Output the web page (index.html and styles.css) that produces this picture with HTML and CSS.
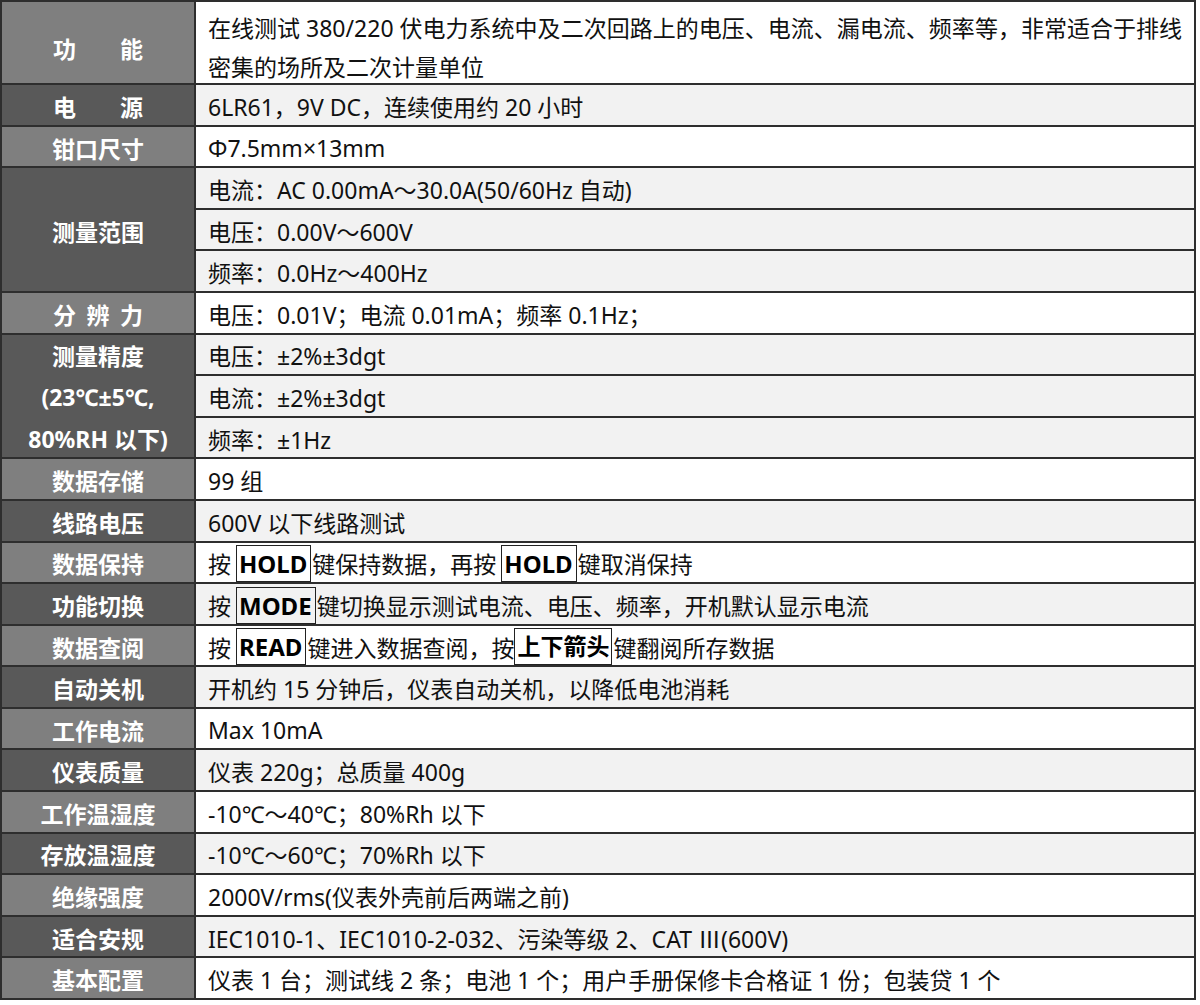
FILE: index.html
```html
<!DOCTYPE html>
<html lang="zh-CN">
<head>
<meta charset="utf-8">
<title>技术参数</title>
<link rel="stylesheet" href="styles.css">
</head>
<body>
<div class="spec">
  <div class="k light r2 first"><span class="pair"><span>功</span><span>能</span></span></div>
  <div class="v w r2 first">
    <div class="line just">在线测试 380/220 伏电力系统中及二次回路上的电压、电流、漏电流、频率等，非常适合于排线</div>
    <div class="line">密集的场所及二次计量单位</div>
  </div>

  <div class="k dark"><span class="pair"><span>电</span><span>源</span></span></div>
  <div class="v g">6LR61，9V DC，连续使用约 20 小时</div>

  <div class="k light">钳口尺寸</div>
  <div class="v w">Φ7.5mm×13mm</div>

  <div class="k dark r3">测量范围</div>
  <div class="v g">电流：AC 0.00mA～30.0A(50/60Hz 自动)</div>
  <div class="v g">电压：0.00V～600V</div>
  <div class="v g">频率：0.0Hz～400Hz</div>

  <div class="k light"><span class="pair"><span>分</span><span>辨</span><span>力</span></span></div>
  <div class="v w">电压：0.01V；电流 0.01mA；频率 0.1Hz；</div>

  <div class="k dark r3 multi"><span>测量精度</span><span>(23℃±5℃,</span><span>80%RH 以下)</span></div>
  <div class="v g">电压：±2%±3dgt</div>
  <div class="v g">电流：±2%±3dgt</div>
  <div class="v g">频率：±1Hz</div>

  <div class="k light">数据存储</div>
  <div class="v w">99 组</div>

  <div class="k dark">线路电压</div>
  <div class="v g">600V 以下线路测试</div>

  <div class="k light">数据保持</div>
  <div class="v w">按<b class="key latin">HOLD</b>键保持数据，再按<b class="key latin">HOLD</b>键取消保持</div>

  <div class="k dark">功能切换</div>
  <div class="v g">按<b class="key latin">MODE</b>键切换显示测试电流、电压、频率，开机默认显示电流</div>

  <div class="k light">数据查阅</div>
  <div class="v w">按<b class="key latin">READ</b>键进入数据查阅，按<b class="key tight">上下箭头</b>键翻阅所存数据</div>

  <div class="k dark">自动关机</div>
  <div class="v g">开机约 15 分钟后，仪表自动关机，以降低电池消耗</div>

  <div class="k light">工作电流</div>
  <div class="v w">Max 10mA</div>

  <div class="k dark">仪表质量</div>
  <div class="v g">仪表 220g；总质量 400g</div>

  <div class="k light">工作温湿度</div>
  <div class="v w">-10℃～40℃；80%Rh 以下</div>

  <div class="k dark">存放温湿度</div>
  <div class="v g">-10℃～60℃；70%Rh 以下</div>

  <div class="k light">绝缘强度</div>
  <div class="v w">2000V/rms(仪表外壳前后两端之前)</div>

  <div class="k dark">适合安规</div>
  <div class="v g">IEC1010-1、IEC1010-2-032、污染等级 2、CAT Ⅲ(600V)</div>

  <div class="k light">基本配置</div>
  <div class="v w">仪表 1 台；测试线 2 条；电池 1 个；用户手册保修卡合格证 1 份；包装贷 1 个</div>
</div>
</body>
</html>
```

FILE: styles.css
```css
html, body {
  margin: 0;
  padding: 0;
  background: #ffffff;
}

body {
  font-family: "Noto Sans", "Noto Sans CJK SC", sans-serif;
  color: #111111;
}

.spec {
  box-sizing: border-box;
  width: 1196px;
  height: 1000px;
  padding: 2px;
  background: #2e2e2e;
  display: grid;
  grid-template-columns: 192px 1fr;
  grid-template-rows: repeat(24, 1fr);
  gap: 2px;
}

.k {
  grid-column: 1;
  display: flex;
  align-items: center;
  justify-content: center;
  color: #ffffff;
  font-weight: 700;
  font-size: 23px;
  padding-top: 2px;
}

.k.light { background: #7f7f7f; }
.k.dark { background: #595959; }

.v {
  grid-column: 2;
  display: flex;
  align-items: center;
  padding: 2px 12px 0 12px;
  font-size: 23px;
  white-space: nowrap;
}

.v.w { background: #ffffff; }
.v.g { background: #f2f2f2; }

.r2 { grid-row: span 2; }
.r3 { grid-row: span 3; }

.k.first { padding-top: 10px; }
.v.first {
  flex-direction: column;
  align-items: stretch;
  justify-content: flex-start;
  padding-top: 7px;
}

.line {
  line-height: 39px;
}

.just {
  text-align: justify;
  text-align-last: justify;
}

.pair {
  display: flex;
  justify-content: space-between;
  width: 90px;
}

.multi {
  flex-direction: column;
  line-height: 41.5px;
  padding-top: 4px;
}

.key {
  display: inline-block;
  align-self: flex-end;
  box-sizing: border-box;
  height: 37px;
  line-height: 35px;
  border: 1.5px solid #222222;
  padding: 0 2px;
  margin-left: 5px;
  margin-right: 1px;
  font-weight: 700;
  color: #000000;
}

.key.latin {
  font-size: 24px;
  padding: 0 3px 0 2px;
}

.key.tight {
  margin-left: 0;
}
```
